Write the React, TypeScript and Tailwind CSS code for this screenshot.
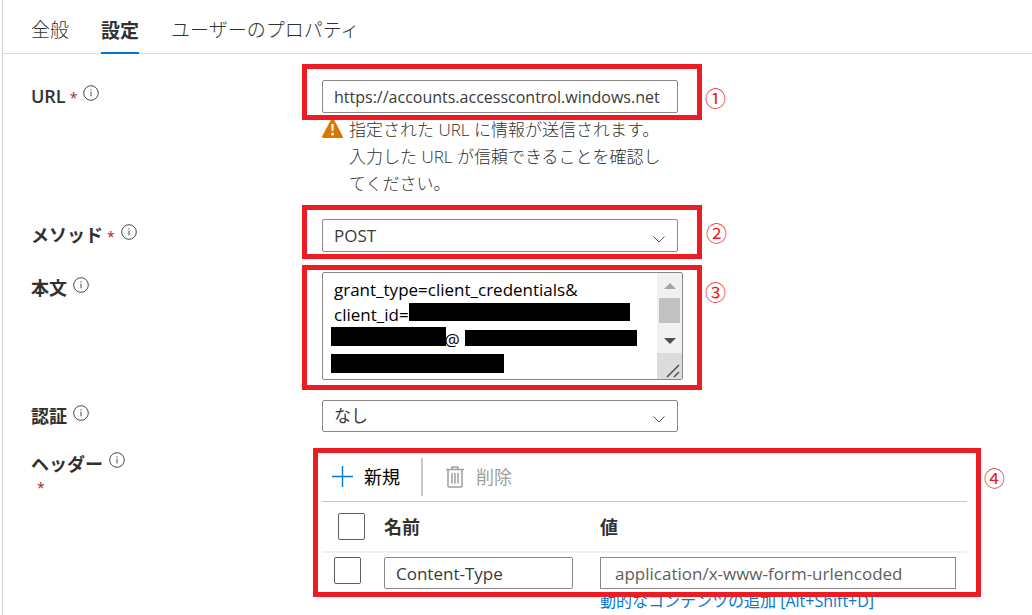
import { useState } from "react";
import type { ReactNode } from "react";

const SECRET_BODY =
  "grant_type=client_credentials&\nclient_id=\n" + "\u00a0".repeat(25) + "@\n";

function InfoIcon() {
  return (
    <svg viewBox="0 0 16 16" className="h-4 w-4 shrink-0" fill="none" stroke="#4a4a4a" aria-hidden="true">
      <circle cx="8" cy="8" r="7.3" strokeWidth="1" />
      <path d="M8 6.6v4.8" strokeWidth="1" />
      <path d="M8 4.2v1.2" strokeWidth="1" />
    </svg>
  );
}

function Chevron() {
  return (
    <svg
      viewBox="0 0 12 7"
      className="pointer-events-none absolute top-1/2 right-[13px] h-[7px] w-3"
      fill="none"
      stroke="#555"
      aria-hidden="true"
    >
      <path d="M0.5 0.5 6 6 11.5 0.5" />
    </svg>
  );
}

function Mark({ box, note, children }: { box: string; note: string; children: string }) {
  return (
    <>
      <div className={`pointer-events-none absolute border-5 border-[#ed1c24] ${box}`} />
      <span className={`absolute text-[21px] leading-5 font-normal text-[#ed1c24] ${note}`}>{children}</span>
    </>
  );
}

function Row({
  label,
  htmlFor,
  required,
  children,
}: {
  label: string;
  htmlFor: string;
  required?: boolean;
  children: ReactNode;
}) {
  return (
    <div className="flex items-start">
      <div className="flex w-[291px] shrink-0 items-center pt-1">
        <label htmlFor={htmlFor} className="text-lg leading-6 font-semibold">
          {label}
          {required && <span className="pl-1 text-sm font-normal text-[#a4262c]">*</span>}
        </label>
        <span className="pb-1.5 pl-1.5">
          <InfoIcon />
        </span>
      </div>
      <div className="relative w-[356px]">{children}</div>
    </div>
  );
}

const field =
  "block w-full appearance-none rounded-xs border border-[#8a8886] bg-white px-[11px] text-[#3b3a39] outline-none";
const tick =
  "block h-[27px] w-[27px] appearance-none rounded-xs border border-[#605e5c] bg-white checked:bg-[#0078d4]";

export default function App() {
  const [url, setUrl] = useState("https://accounts.accesscontrol.windows.net");
  const [body, setBody] = useState(SECRET_BODY);
  const [name, setName] = useState("Content-Type");
  const [value, setValue] = useState("application/x-www-form-urlencoded");

  return (
    <main
      lang="ja"
      className="ml-0.5 min-h-screen border-l border-[#d2d0ce] bg-white font-['Open_Sans','Noto_Sans_CJK_JP',sans-serif] text-[#323130]"
    >
      <nav className="flex h-[54px] gap-8 border-b border-[#dadada] pl-7 text-[19px]">
        <button className="pt-2 font-light">全般</button>
        <button className="-mb-px border-b-2 border-[#0078d4] pt-2.5 font-bold">設定</button>
        <button className="pt-2 font-light">ユーザーのプロパティ</button>
      </nav>

      <form className="flex flex-col gap-5 pt-[26px] pl-7">
        <Row label="URL" htmlFor="url" required>
          <input
            id="url"
            className={`${field} h-[33px] text-base`}
            value={url}
            onChange={(e) => setUrl(e.target.value)}
          />
          <div className="flex gap-1.5 pt-[3px] pb-0.5">
            <svg viewBox="0 0 21 20" className="mt-0.5 h-5 w-[21px] shrink-0" aria-hidden="true">
              <path d="M10.5 1 20 19H1Z" fill="#db7500" stroke="#db7500" strokeWidth="2" strokeLinejoin="round" />
              <path d="M9.2 6h2.6l-.4 7H9.6Z" fill="#fff" />
              <circle cx="10.5" cy="16" r="1.5" fill="#fff" />
            </svg>
            <p className="text-[17px] leading-[27px] font-light whitespace-nowrap">
              指定された URL に情報が送信されます。
              <br />
              入力した URL が信頼できることを確認し
              <br />
              てください。
            </p>
          </div>
          <Mark box="-top-4 -left-5 h-14 w-[400px]" note="top-2 left-[383px]">①</Mark>
        </Row>

        <Row label="メソッド" htmlFor="method" required>
          <select id="method" className={`${field} h-[33px] text-[17px]`}>
            <option>POST</option>
          </select>
          <Chevron />
          <Mark box="-top-3.5 -left-5 h-[54px] w-[400px]" note="top-1 left-[384px]">②</Mark>
        </Row>

        <Row label="本文" htmlFor="body">
          <div className="-mr-[5px] flex h-[108px] overflow-hidden rounded-xs border border-[#8a8886]">
            <textarea
              id="body"
              className="min-w-0 flex-1 resize-none overflow-hidden pt-1 pl-[11px] text-[17px] leading-[25px] text-black outline-none"
              value={body}
              onChange={(e) => setBody(e.target.value)}
            />
            <svg viewBox="0 0 25 106" className="h-[106px] w-[25px] shrink-0" aria-hidden="true">
              <path d="M0 0h25v106H0Z" fill="#f1f1f1" />
              <path d="M0 80h25v26H0Z" fill="#dcdcdc" />
              <path d="M7 16h12l-6-6Z" fill="#a3a3a3" />
              <path d="M2 25h21v25H2Z" fill="#c1c1c1" />
              <path d="M7 65h12l-6 6Z" fill="#505050" />
              <path d="M10 104 22 92M17 104l5-5" stroke="#505050" strokeWidth="1.5" />
            </svg>
          </div>
          <div className="absolute top-[31px] left-[87px] h-[18px] w-[221px] bg-black" />
          <div className="absolute top-[55px] left-[9px] h-[19px] w-[115px] bg-black" />
          <div className="absolute top-[58px] left-[143px] h-4 w-[172px] bg-black" />
          <div className="absolute top-[82px] left-[9px] h-[19px] w-[173px] bg-black" />
          <Mark box="-top-[7px] -left-5 h-[125px] w-[400px]" note="top-2.5 left-[383px]">③</Mark>
        </Row>

        <Row label="認証" htmlFor="auth">
          <select id="auth" className={`${field} h-8 text-[17px]`}>
            <option>なし</option>
          </select>
          <Chevron />
        </Row>

        <section className="flex items-start">
          <div className="w-[291px] shrink-0">
            <h2 className="flex items-start text-lg leading-6 font-semibold">
              ヘッダー
              <span className="pl-1.5">
                <InfoIcon />
              </span>
            </h2>
            <span className="block pl-1.5 text-sm leading-6 text-[#a4262c]">*</span>
          </div>
          <div className="relative w-[645px]">
            <div className="flex h-[50px] items-center border-b border-[#c8c6c4] pl-2.5 text-lg">
              <button type="button" className="flex items-center gap-[11px] text-black">
                <svg viewBox="0 0 21 21" className="h-[21px] w-[21px]" stroke="#0078d4" strokeWidth="1.4" aria-hidden="true">
                  <path d="M10.5 0v21M0 10.5h21" />
                </svg>
                新規
              </button>
              <span className="mr-[23px] ml-[21px] h-[38px] w-0.5 bg-[#c8c8c8]" />
              <button type="button" disabled className="flex items-center gap-3 text-[#a19f9d]">
                <svg viewBox="0 0 18 22" className="h-[22px] w-[18px]" fill="none" stroke="#a19f9d" strokeWidth="1.5" aria-hidden="true">
                  <path d="M0 3.5h18M6 3.5V1h6v2.5M2 3.5V20q0 1 1 1h12q1 0 1-1V3.5M6 7v10.5M9 7v10.5M12 7v10.5" />
                </svg>
                削除
              </button>
            </div>
            <table className="w-full table-fixed text-left">
              <thead>
                <tr className="h-[50px] border-b-2 border-[#f0f0f0] text-lg">
                  <th className="w-[62px] pl-4">
                    <input type="checkbox" aria-label="すべて選択" className={tick} />
                  </th>
                  <th className="w-[216px] font-bold">名前</th>
                  <th className="font-bold">値</th>
                </tr>
              </thead>
              <tbody>
                <tr className="align-top">
                  <td className="pt-1 pl-3">
                    <input type="checkbox" aria-label="行を選択" className={tick} />
                  </td>
                  <td className="pt-1 pr-[27px]">
                    <input
                      aria-label="名前"
                      className={`${field} h-8 text-[17px]`}
                      value={name}
                      onChange={(e) => setName(e.target.value)}
                    />
                  </td>
                  <td className="pt-1 pr-[11px]">
                    <input
                      aria-label="値"
                      className="block h-8 w-full border border-[#8a8886] px-3.5 text-[17px] text-[#605e5c] outline-none"
                      value={value}
                      onChange={(e) => setValue(e.target.value)}
                    />
                    <a href="#dynamic" className="block text-base leading-6 whitespace-nowrap text-[#0078d4]">
                      動的なコンテンツの追加 [Alt+Shift+D]
                    </a>
                  </td>
                </tr>
              </tbody>
            </table>
            <Mark box="-top-1 -left-[9px] h-[149px] w-[668px]" note="top-4 left-[662px]">④</Mark>
          </div>
        </section>
      </form>
    </main>
  );
}
